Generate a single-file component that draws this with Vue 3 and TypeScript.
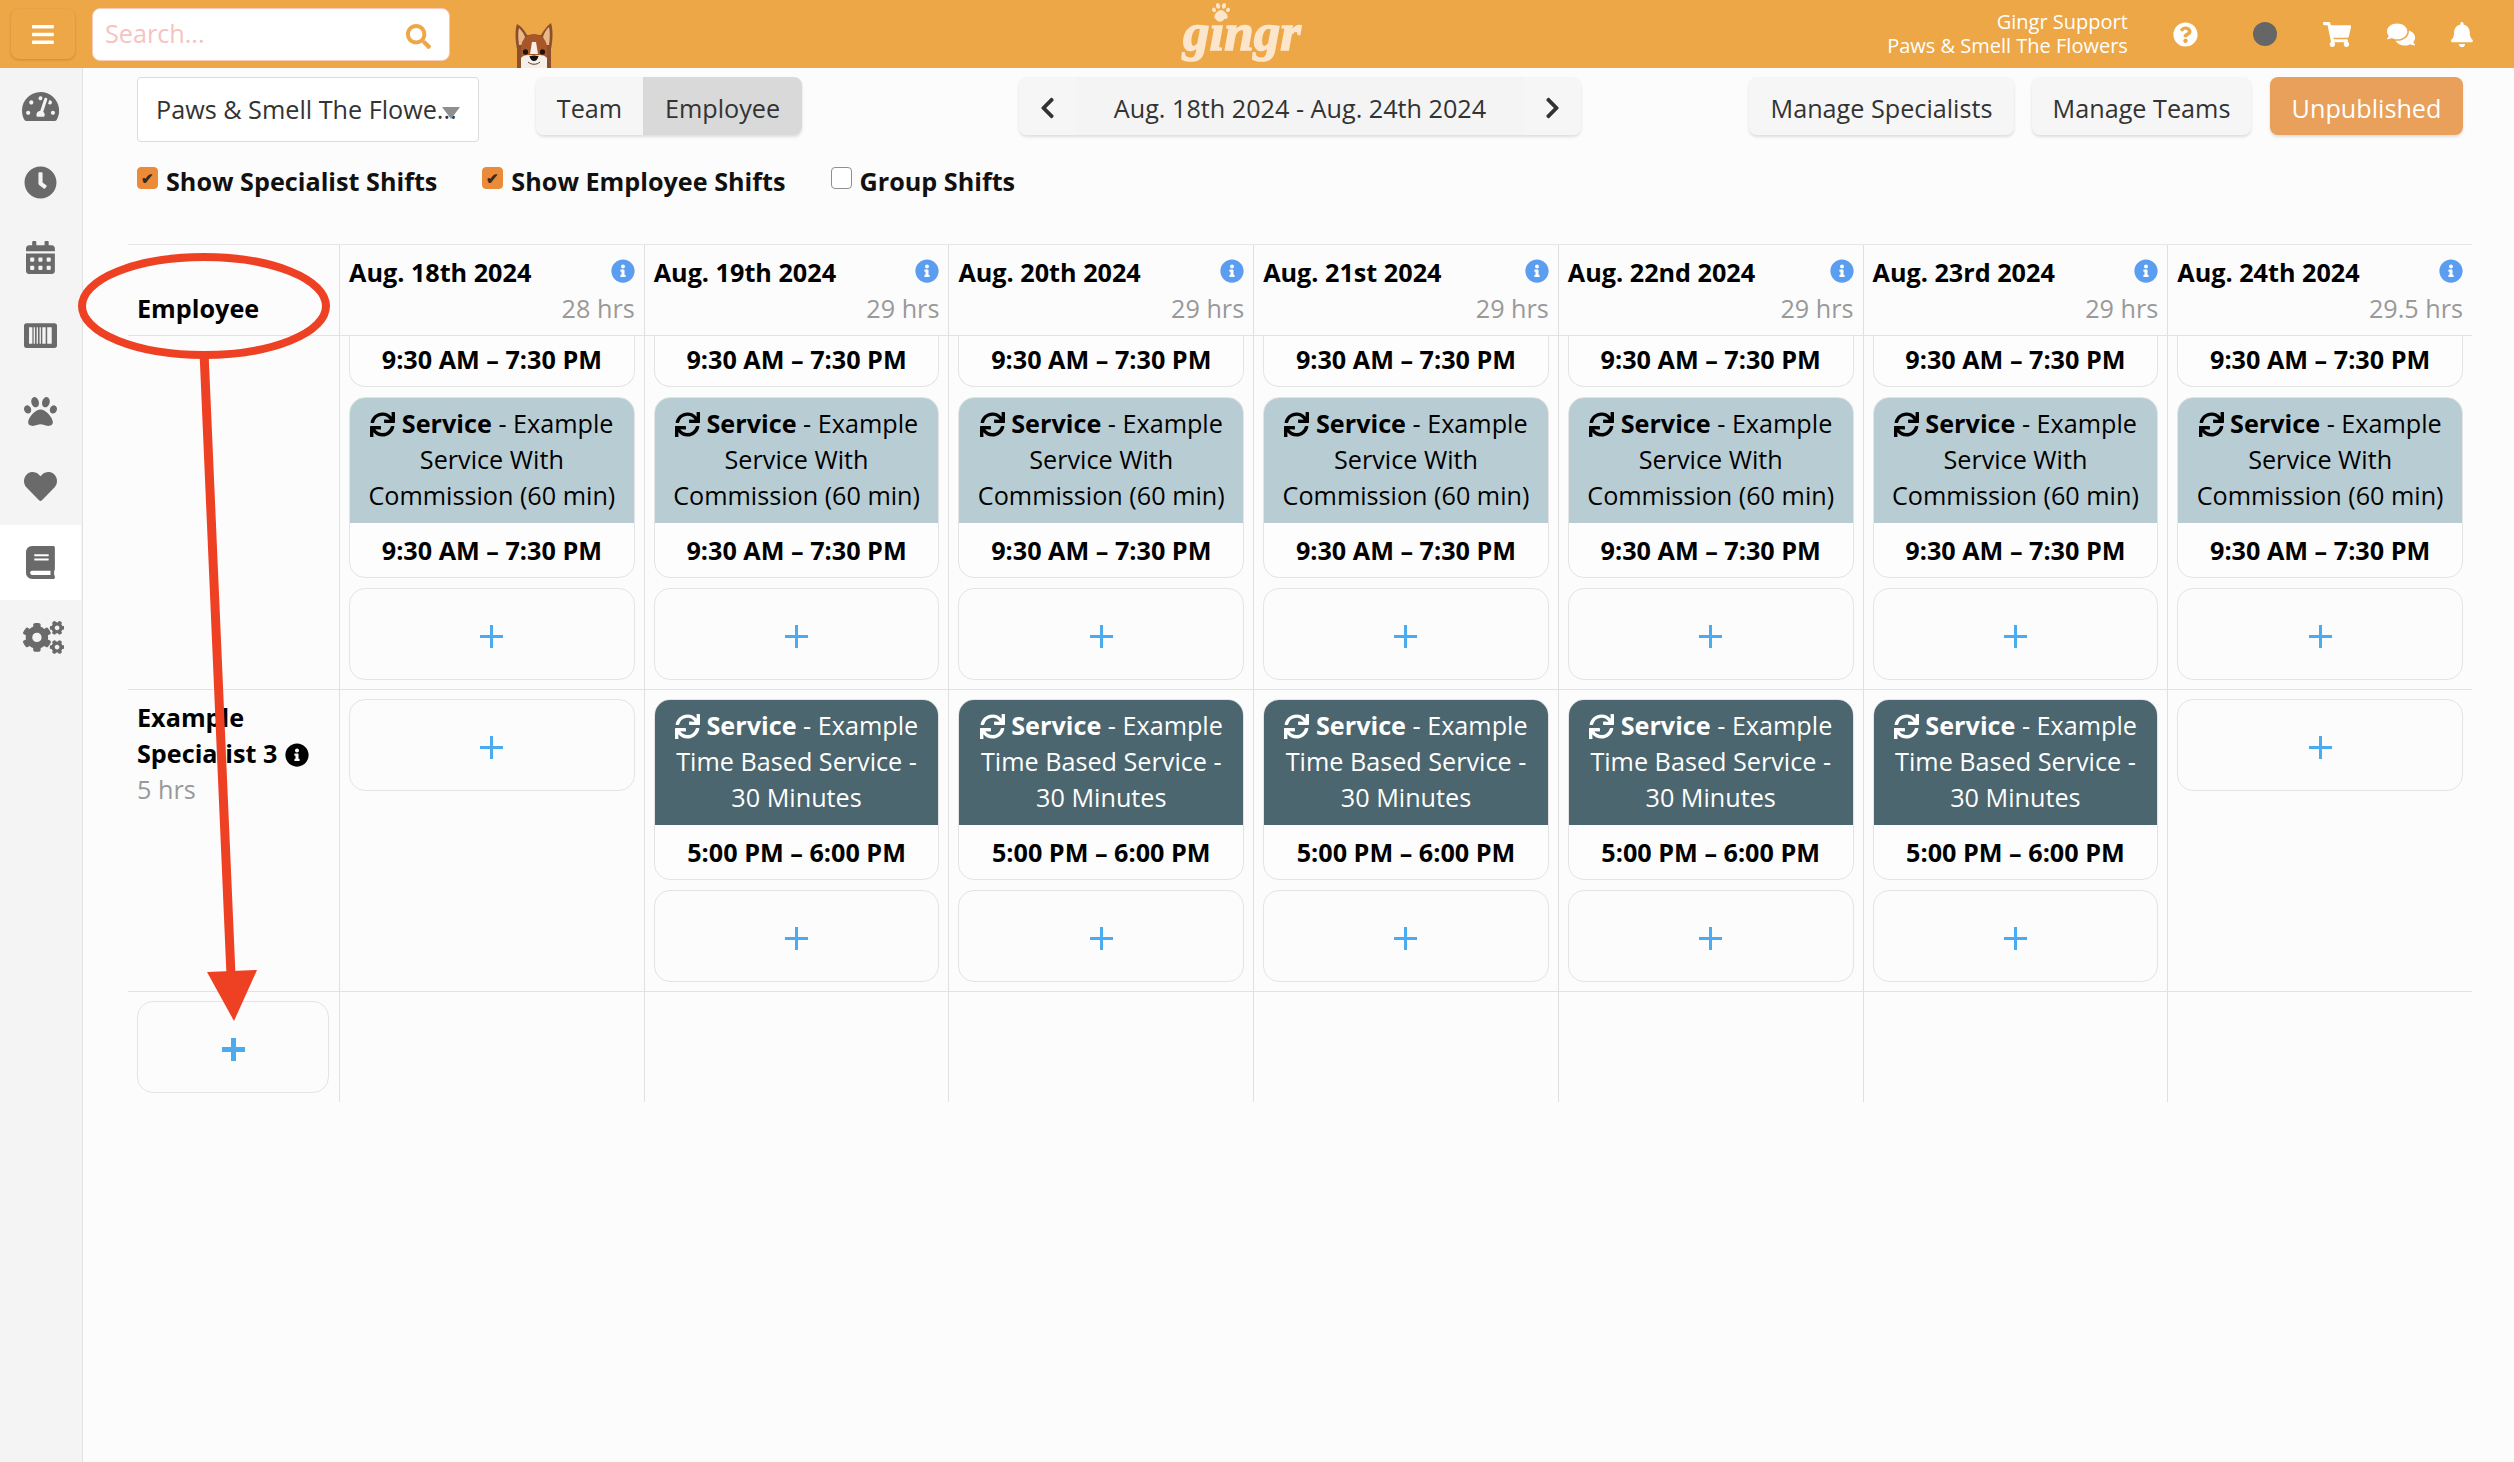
<script setup lang="ts">
  import { h } from 'vue'

  const ICONS: Record<string, [number, string]> = {
    bars: [448, 'M16 132h416c8.837 0 16-7.163 16-16V76c0-8.837-7.163-16-16-16H16C7.163 60 0 67.163 0 76v40c0 8.837 7.163 16 16 16zm0 160h416c8.837 0 16-7.163 16-16v-40c0-8.837-7.163-16-16-16H16c-8.837 0-16 7.163-16 16v40c0 8.837 7.163 16 16 16zm0 160h416c8.837 0 16-7.163 16-16v-40c0-8.837-7.163-16-16-16H16c-8.837 0-16 7.163-16 16v40c0 8.837 7.163 16 16 16z'],
    search: [512, 'M505 442.7L405.3 343c-4.5-4.5-10.6-7-17-7H372c27.6-35.3 44-79.7 44-128C416 93.1 322.9 0 208 0S0 93.1 0 208s93.1 208 208 208c48.3 0 92.7-16.4 128-44v16.3c0 6.4 2.5 12.5 7 17l99.7 99.7c9.4 9.4 24.6 9.4 33.9 0l28.3-28.3c9.4-9.4 9.4-24.6.1-34zM208 336c-70.7 0-128-57.2-128-128 0-70.7 57.2-128 128-128 70.7 0 128 57.2 128 128 0 70.7-57.2 128-128 128z'],
    sync: [512, 'M440.65 12.57l4 82.77A247.16 247.16 0 0 0 255.83 8C134.73 8 33.91 94.92 12.29 209.82A12 12 0 0 0 24.09 224h49.05a12 12 0 0 0 11.67-9.26 175.91 175.91 0 0 1 317-56.94l-101.46-4.86a12 12 0 0 0-12.57 12v47.41a12 12 0 0 0 12 12H500a12 12 0 0 0 12-12V12a12 12 0 0 0-12-12h-47.37a12 12 0 0 0-11.98 12.57zM255.83 432a175.61 175.61 0 0 1-146-77.8l101.8 4.87a12 12 0 0 0 12.57-12v-47.4a12 12 0 0 0-12-12H12a12 12 0 0 0-12 12V500a12 12 0 0 0 12 12h47.35a12 12 0 0 0 12-12.6l-4.15-82.57A247.17 247.17 0 0 0 255.83 504c121.11 0 221.93-86.92 243.55-201.82a12 12 0 0 0-11.8-14.18h-49.05a12 12 0 0 0-11.67 9.26A175.86 175.86 0 0 1 255.83 432z'],
    info: [512, 'M256 8C119.043 8 8 119.083 8 256c0 136.997 111.043 248 248 248s248-111.003 248-248C504 119.083 392.957 8 256 8zm0 110c23.196 0 42 18.804 42 42s-18.804 42-42 42-42-18.804-42-42 18.804-42 42-42zm56 254c0 6.627-5.373 12-12 12h-88c-6.627 0-12-5.373-12-12v-24c0-6.627 5.373-12 12-12h12v-64h-12c-6.627 0-12-5.373-12-12v-24c0-6.627 5.373-12 12-12h64c6.627 0 12 5.373 12 12v100h12c6.627 0 12 5.373 12 12v24z'],
    question: [512, 'M504 256c0 136.997-111.043 248-248 248S8 392.997 8 256C8 119.083 119.043 8 256 8s248 111.083 248 248zM262.655 90c-54.497 0-89.255 22.957-116.549 63.758-3.536 5.286-2.353 12.415 2.715 16.258l34.699 26.31c5.205 3.947 12.621 3.008 16.665-2.122 17.864-22.658 30.113-35.797 57.303-35.797 20.429 0 45.698 13.148 45.698 32.958 0 14.976-12.363 22.667-32.534 33.976C247.128 238.528 216 254.941 216 296v4c0 6.627 5.373 12 12 12h56c6.627 0 12-5.373 12-12v-1.333c0-28.462 83.186-29.647 83.186-106.667 0-58.002-60.165-102-116.531-102zM256 338c-25.365 0-46 20.635-46 46 0 25.364 20.635 46 46 46s46-20.636 46-46c0-25.365-20.635-46-46-46z'],
    cart: [576, 'M528.12 301.319l47.273-208C578.806 78.301 567.391 64 551.99 64H159.208l-9.166-44.81C147.758 8.021 137.93 0 126.529 0H24C10.745 0 0 10.745 0 24v16c0 13.255 10.745 24 24 24h69.883l70.248 343.435C147.325 417.1 136 435.222 136 456c0 30.928 25.072 56 56 56s56-25.072 56-56c0-15.674-6.447-29.835-16.824-40h209.647C430.447 426.165 424 440.326 424 456c0 30.928 25.072 56 56 56s56-25.072 56-56c0-22.172-12.888-41.332-31.579-50.405l5.517-24.276c3.413-15.018-8.002-29.319-23.403-29.319H218.117l-6.545-32h293.145c11.206 0 20.92-7.754 23.403-18.681z'],
    comments: [576, 'M416 192c0-88.4-93.1-160-208-160S0 103.6 0 192c0 34.3 14.1 65.9 38 92-13.4 30.2-35.5 54.2-35.8 54.5-2.2 2.3-2.8 5.7-1.5 8.7S4.8 352 8 352c36.6 0 66.9-12.3 88.7-25 32.2 15.7 70.3 25 111.3 25 114.9 0 208-71.6 208-160zm122 220c23.9-26 38-57.7 38-92 0-66.9-53.5-124.2-129.3-148.1.9 6.6 1.3 13.3 1.3 20.1 0 105.9-107.7 192-240 192-10.8 0-21.3-.8-31.7-1.9C207.8 439.6 281.8 480 368 480c41 0 79.1-9.2 111.3-25 21.8 12.7 52.1 25 88.7 25 3.2 0 6.1-1.9 7.3-4.8 1.3-2.9.7-6.3-1.5-8.7-.3-.3-22.4-24.2-35.8-54.5z'],
    bell: [448, 'M224 512c35.32 0 63.97-28.65 63.97-64H160.03c0 35.35 28.65 64 63.97 64zm215.39-149.71c-19.32-20.76-55.47-51.99-55.47-154.29 0-77.7-54.48-139.9-127.94-155.16V32c0-17.67-14.32-32-31.98-32s-31.98 14.33-31.98 32v20.84C118.56 68.1 64.08 130.3 64.08 208c0 102.3-36.15 133.53-55.47 154.29-6 6.45-8.66 14.16-8.61 21.71.11 16.4 12.98 32 32.1 32h383.8c19.12 0 32-15.6 32.1-32 .05-7.55-2.61-15.27-8.61-21.71z'],
    gauge: [576, 'M288 32C128.94 32 0 160.94 0 320c0 52.8 14.25 102.26 39.06 144.8 5.61 9.62 16.3 15.2 27.44 15.2h443c11.14 0 21.83-5.58 27.44-15.2C561.75 422.26 576 372.8 576 320c0-159.06-128.94-288-288-288zm0 64c14.71 0 26.58 10.13 30.32 23.65-1.11 2.26-2.64 4.23-3.45 6.67l-9.22 27.67c-5.13 3.49-10.97 6.01-17.64 6.01-17.67 0-32-14.33-32-32S270.33 96 288 96zM96 384c-17.67 0-32-14.33-32-32s14.33-32 32-32 32 14.33 32 32-14.33 32-32 32zm48-160c-17.67 0-32-14.33-32-32s14.33-32 32-32 32 14.33 32 32-14.33 32-32 32zm246.77-72.41l-61.33 184C343.13 347.33 352 364.54 352 384c0 11.72-3.38 22.55-8.88 32H232.88c-5.5-9.45-8.88-20.28-8.88-32 0-33.94 26.5-61.43 59.9-63.59l61.34-184.01c4.17-12.56 17.73-19.45 30.36-15.17 12.57 4.19 19.35 17.79 15.17 30.36zm14.66 57.2l15.52-46.55c3.47-1.29 7.13-2.23 11.05-2.23 17.67 0 32 14.33 32 32s-14.33 32-32 32c-11.38-.01-20.89-6.27-26.57-15.22zM480 384c-17.67 0-32-14.33-32-32s14.33-32 32-32 32 14.33 32 32-14.33 32-32 32z'],
    clock: [512, 'M256,8C119,8,8,119,8,256S119,504,256,504,504,393,504,256,393,8,256,8Zm92.49,313h0l-20,25a16,16,0,0,1-22.49,2.5h0l-67-49.72a40,40,0,0,1-15-31.23V112a16,16,0,0,1,16-16h32a16,16,0,0,1,16,16V256l58,42.5A16,16,0,0,1,348.49,321Z'],
    calendar: [448, 'M0 464c0 26.5 21.5 48 48 48h352c26.5 0 48-21.5 48-48V192H0v272zm320-196c0-6.6 5.4-12 12-12h40c6.6 0 12 5.4 12 12v40c0 6.6-5.4 12-12 12h-40c-6.6 0-12-5.4-12-12v-40zm0 128c0-6.6 5.4-12 12-12h40c6.6 0 12 5.4 12 12v40c0 6.6-5.4 12-12 12h-40c-6.6 0-12-5.4-12-12v-40zM192 268c0-6.6 5.4-12 12-12h40c6.6 0 12 5.4 12 12v40c0 6.6-5.4 12-12 12h-40c-6.6 0-12-5.4-12-12v-40zm0 128c0-6.6 5.4-12 12-12h40c6.6 0 12 5.4 12 12v40c0 6.6-5.4 12-12 12h-40c-6.6 0-12-5.4-12-12v-40zM64 268c0-6.6 5.4-12 12-12h40c6.6 0 12 5.4 12 12v40c0 6.6-5.4 12-12 12H76c-6.6 0-12-5.4-12-12v-40zm0 128c0-6.6 5.4-12 12-12h40c6.6 0 12 5.4 12 12v40c0 6.6-5.4 12-12 12H76c-6.6 0-12-5.4-12-12v-40zM400 64h-48V16c0-8.8-7.2-16-16-16h-32c-8.8 0-16 7.2-16 16v48H160V16c0-8.8-7.2-16-16-16h-32c-8.8 0-16 7.2-16 16v48H48C21.5 64 0 85.5 0 112v48h448v-48c0-26.5-21.5-48-48-48z'],
    barcode: [512, 'M36 64h440c20 0 36 16 36 36v312c0 20-16 36-36 36H36c-20 0-36-16-36-36V100c0-20 16-36 36-36zm42 64v256h52V128H78zm72 0v256h20V128h-20zm46 0v256h20V128h-20zm46 0v256h20V128h-20zm42 0v256h52V128h-52zm76 0v256h70V128h-70z'],
    paw: [512, 'M256 224c-79.41 0-192 122.76-192 200.25 0 34.9 26.81 55.75 71.74 55.75 48.84 0 81.09-25.08 120.26-25.08 39.51 0 71.85 25.08 120.26 25.08 44.93 0 71.74-20.85 71.74-55.75C448 346.76 335.41 224 256 224zm-147.28-12.61c-10.4-34.65-42.44-57.09-71.56-50.13-29.12 6.96-44.29 40.69-33.89 75.34 10.4 34.65 42.44 57.09 71.56 50.13 29.12-6.96 44.29-40.69 33.89-75.34zm84.72-20.78c30.94-8.14 46.42-49.94 34.58-93.36s-46.52-72.01-77.46-63.87-46.42 49.94-34.58 93.36c11.84 43.42 46.52 72.02 77.46 63.87zm281.39-29.34c-29.12-6.96-61.15 15.48-71.56 50.13-10.4 34.65 4.77 68.38 33.89 75.34 29.12 6.96 61.15-15.48 71.56-50.13 10.4-34.65-4.77-68.38-33.89-75.34zm-156.27 29.34c30.94 8.14 65.62-20.45 77.46-63.87 11.84-43.42-3.64-85.21-34.58-93.36s-65.62 20.45-77.46 63.87c-11.84 43.42 3.64 85.22 34.58 93.36z'],
    heart: [512, 'M462.3 62.6C407.5 15.9 326 24.3 275.7 76.2L256 96.5l-19.7-20.3C186.1 24.3 104.5 15.9 49.7 62.6c-62.8 53.6-66.1 149.8-9.9 207.9l193.5 199.8c12.5 12.9 32.8 12.9 45.3 0l193.5-199.8c56.3-58.1 53-154.3-9.8-207.9z'],
    book: [448, 'M448 360V24c0-13.3-10.7-24-24-24H96C43 0 0 43 0 96v320c0 53 43 96 96 96h328c13.3 0 24-10.7 24-24v-16c0-7.5-3.5-14.3-8.9-18.7-4.2-15.4-4.2-59.3 0-74.7 5.4-4.3 8.9-11.1 8.9-18.6zM128 134c0-3.3 2.7-6 6-6h212c3.3 0 6 2.7 6 6v20c0 3.3-2.7 6-6 6H134c-3.3 0-6-2.7-6-6v-20zm0 64c0-3.3 2.7-6 6-6h212c3.3 0 6 2.7 6 6v20c0 3.3-2.7 6-6 6H134c-3.3 0-6-2.7-6-6v-20zm253.4 250H96c-17.7 0-32-14.3-32-32 0-17.6 14.4-32 32-32h285.4c-1.9 17.1-1.9 46.9 0 64z'],
    cogs: [640, 'M512.1 191l-8.2 14.3c-3 5.3-9.4 7.5-15.1 5.4-11.8-4.4-22.6-10.7-32.1-18.6-4.6-3.8-5.8-10.5-2.8-15.7l8.2-14.3c-6.9-8-12.3-17.3-15.9-27.4h-16.5c-6 0-11.2-4.3-12.2-10.3-2-12-2.1-24.6 0-37.1 1-6 6.2-10.4 12.2-10.4h16.5c3.6-10.1 9-19.4 15.9-27.4l-8.2-14.3c-3-5.2-1.9-11.9 2.8-15.7 9.5-7.9 20.4-14.2 32.1-18.6 5.7-2.1 12.1.1 15.1 5.4l8.2 14.3c10.5-1.9 21.2-1.9 31.7 0L552 6.3c3-5.3 9.4-7.5 15.1-5.4 11.8 4.4 22.6 10.7 32.1 18.6 4.6 3.8 5.8 10.5 2.8 15.7l-8.2 14.3c6.9 8 12.3 17.3 15.9 27.4h16.5c6 0 11.2 4.3 12.2 10.3 2 12 2.1 24.6 0 37.1-1 6-6.2 10.4-12.2 10.4h-16.5c-3.6 10.1-9 19.4-15.9 27.4l8.2 14.3c3 5.2 1.9 11.9-2.8 15.7-9.5 7.9-20.4 14.2-32.1 18.6-5.7 2.1-12.1-.1-15.1-5.4l-8.2-14.3c-10.4 1.9-21.2 1.9-31.7 0zm-10.5-58.8c38.5 29.6 82.4-14.3 52.8-52.8-38.5-29.7-82.4 14.3-52.8 52.8zM386.3 286.1l33.7 16.8c10.1 5.8 14.5 18.1 10.5 29.1-8.9 24.2-26.4 46.4-42.6 65.8-7.4 8.9-20.2 11.1-30.3 5.3l-29.1-16.8c-16 13.7-34.6 24.6-54.9 31.7v33.6c0 11.6-8.3 21.6-19.7 23.6-24.6 4.2-50.4 4.4-75.9 0-11.5-2-20-11.9-20-23.6V418c-20.3-7.2-38.9-18-54.9-31.7L74 403c-10 5.8-22.9 3.6-30.3-5.3-16.2-19.4-33.3-41.6-42.2-65.7-4-10.9.4-23.2 10.5-29.1l33.3-16.8c-3.9-20.9-3.9-42.4 0-63.4L12 205.8c-10.1-5.8-14.6-18.1-10.5-29 8.9-24.2 26-46.4 42.2-65.8 7.4-8.9 20.2-11.1 30.3-5.3l29.1 16.8c16-13.7 34.6-24.6 54.9-31.7V57.1c0-11.5 8.2-21.5 19.6-23.5 24.6-4.2 50.5-4.4 76-.1 11.5 2 20 11.9 20 23.6v33.6c20.3 7.2 38.9 18 54.9 31.7l29.1-16.8c10-5.8 22.9-3.6 30.3 5.3 16.2 19.4 33.2 41.6 42.1 65.8 4 10.9.1 23.2-10 29.1l-33.7 16.8c3.9 21 3.9 42.5 0 63.5zm-117.6 21.1c59.2-77-28.7-164.9-105.7-105.7-59.2 77 28.7 164.9 105.7 105.7zm243.4 182.7l-8.2 14.3c-3 5.3-9.4 7.5-15.1 5.4-11.8-4.4-22.6-10.7-32.1-18.6-4.6-3.8-5.8-10.5-2.8-15.7l8.2-14.3c-6.9-8-12.3-17.3-15.9-27.4h-16.5c-6 0-11.2-4.3-12.2-10.3-2-12-2.1-24.6 0-37.1 1-6 6.2-10.4 12.2-10.4h16.5c3.6-10.1 9-19.4 15.9-27.4l-8.2-14.3c-3-5.2-1.9-11.9 2.8-15.7 9.5-7.9 20.4-14.2 32.1-18.6 5.7-2.1 12.1.1 15.1 5.4l8.2 14.3c10.5-1.9 21.2-1.9 31.7 0l8.2-14.3c3-5.3 9.4-7.5 15.1-5.4 11.8 4.4 22.6 10.7 32.1 18.6 4.6 3.8 5.8 10.5 2.8 15.7l-8.2 14.3c6.9 8 12.3 17.3 15.9 27.4h16.5c6 0 11.2 4.3 12.2 10.3 2 12 2.1 24.6 0 37.1-1 6-6.2 10.4-12.2 10.4h-16.5c-3.6 10.1-9 19.4-15.9 27.4l8.2 14.3c3 5.2 1.9 11.9-2.8 15.7-9.5 7.9-20.4 14.2-32.1 18.6-5.7 2.1-12.1-.1-15.1-5.4l-8.2-14.3c-10.4 1.9-21.2 1.9-31.7 0zM501.6 431c38.5 29.6 82.4-14.3 52.8-52.8-38.5-29.6-82.4 14.3-52.8 52.8z'],
    left: [320, 'M34.52 239.03L228.87 44.69c9.37-9.37 24.57-9.37 33.94 0l22.67 22.67c9.36 9.36 9.37 24.52.04 33.9L131.49 256l154.02 154.75c9.34 9.38 9.32 24.54-.04 33.9l-22.67 22.67c-9.37 9.37-24.57 9.37-33.94 0L34.52 272.97c-9.37-9.37-9.37-24.57 0-33.94z'],
    right: [320, 'M285.476 272.971L91.132 467.314c-9.373 9.373-24.569 9.373-33.941 0l-22.667-22.667c-9.357-9.357-9.375-24.522-.04-33.901L188.505 256 34.484 101.255c-9.335-9.379-9.317-24.544.04-33.901l22.667-22.667c9.373-9.373 24.569-9.373 33.941 0L285.475 239.03c9.373 9.372 9.373 24.568.001 33.941z'],
  }

  // small inline icon, size comes from font-size
  const Fa = (p: { name: string }) => {
    const icon = ICONS[p.name]
    return h('svg', { viewBox: `0 0 ${icon[0]} 512`, fill: 'currentColor', class: 'fa', 'aria-hidden': 'true' }, [
      h('path', { d: icon[1] }),
    ])
  }

  const navItems = ['gauge', 'clock', 'calendar', 'barcode', 'paw', 'heart', 'book', 'cogs']

  const days = [
    { label: 'Aug. 18th 2024', hrs: '28 hrs', dark: false },
    { label: 'Aug. 19th 2024', hrs: '29 hrs', dark: true },
    { label: 'Aug. 20th 2024', hrs: '29 hrs', dark: true },
    { label: 'Aug. 21st 2024', hrs: '29 hrs', dark: true },
    { label: 'Aug. 22nd 2024', hrs: '29 hrs', dark: true },
    { label: 'Aug. 23rd 2024', hrs: '29 hrs', dark: true },
    { label: 'Aug. 24th 2024', hrs: '29.5 hrs', dark: false },
  ]
</script>

<template>
  <div class="page">
    <header class="topbar">
      <button class="menu-btn"><Fa name="bars" /></button>
      <div class="search">
        <span class="search-text">Search...</span>
        <Fa name="search" class="search-icon" />
      </div>
      <svg class="dog" viewBox="0 0 38 45" aria-hidden="true">
        <path d="M2 26 C0 16 0 6 2 1 C6 3 10 8 12 12 L26 12 C29 7 33 2 36 0 C38 6 38 16 36 26 L36 45 L2 45 Z" fill="#8c4f2c" />
        <path d="M4 22 C3 15 3 9 4 5 C7 8 9 11 10 14 L7 22 Z" fill="#e9b98a" />
        <path d="M34 22 C35 15 35 8 34 4 C31 7 29 10 28 14 L31 22 Z" fill="#e9b98a" />
        <path d="M6 24 C7 15 13 11 19 11 C25 11 31 15 32 24 L32 45 L6 45 Z" fill="#a9552a" />
        <path d="M17 19 L21 19 L23 31 L15 31 Z" fill="#f7efe6" />
        <path d="M6 35 C10 31 15 32 19 33 C23 32 28 31 32 35 L32 45 L6 45 Z" fill="#f5efe8" />
        <ellipse cx="10.5" cy="29" rx="2.6" ry="2.8" fill="#1c1410" />
        <ellipse cx="27.5" cy="29" rx="2.6" ry="2.8" fill="#1c1410" />
        <path d="M14.5 33 L23.5 33 C23 36 21 38 19 38 C17 38 15 36 14.5 33 Z" fill="#15110f" />
        <path d="M13 39 C16 42 22 42 25 39" fill="none" stroke="#5a3a28" stroke-width="1" />
      </svg>
      <div class="logo">
        <Fa name="paw" class="logo-paw" />
        <span class="logo-text">gingr</span>
      </div>
      <div class="account">
        <div>Gingr Support</div>
        <div>Paws &amp; Smell The Flowers</div>
      </div>
      <Fa name="question" class="top-icon i-help" />
      <span class="avatar"></span>
      <Fa name="cart" class="top-icon i-cart" />
      <Fa name="comments" class="top-icon i-chat" />
      <Fa name="bell" class="top-icon i-bell" />
    </header>

    <div class="body">
      <nav class="sidebar">
        <div v-for="item in navItems" :key="item" class="nav-item" :class="[`nav-${item}`, { active: item === 'book' }]">
          <Fa :name="item" />
        </div>
      </nav>

      <main class="content">
        <div class="toolbar">
          <div class="select">
            <span class="select-text">Paws &amp; Smell The Flowe...</span>
            <span class="select-arrow"></span>
          </div>
          <div class="btn-group view-group">
            <button class="btn team">Team</button>
            <button class="btn is-on">Employee</button>
          </div>
          <div class="btn-group date-group">
            <button class="btn arrow"><Fa name="left" /></button>
            <div class="btn date">Aug. 18th 2024 - Aug. 24th 2024</div>
            <button class="btn arrow"><Fa name="right" /></button>
          </div>
          <div class="actions">
            <button class="btn solo spec">Manage Specialists</button>
            <button class="btn solo teams">Manage Teams</button>
            <button class="btn solo publish">Unpublished</button>
          </div>
        </div>

        <div class="filters">
          <label class="check"><span class="box on">✔</span>Show Specialist Shifts</label>
          <label class="check"><span class="box on">✔</span>Show Employee Shifts</label>
          <label class="check"><span class="box"></span>Group Shifts</label>
        </div>

        <div class="grid">
          <div class="cell head first"><strong>Employee</strong></div>
          <div v-for="d in days" :key="d.label" class="cell head">
            <div class="day-line">
              <strong>{{ d.label }}</strong>
              <Fa name="info" class="day-info" />
            </div>
            <div class="hrs">{{ d.hrs }}</div>
          </div>

          <div class="cell first"></div>
          <div v-for="d in days" :key="'r1-' + d.label" class="cell stack row1">
            <div class="card clipped"><div class="time">9:30 AM – 7:30 PM</div></div>
            <div class="card">
              <div class="svc light">
                <Fa name="sync" class="sync" /> <b>Service</b> - Example Service With Commission (60 min)
              </div>
              <div class="time">9:30 AM – 7:30 PM</div>
            </div>
            <div class="add"><span class="plus"></span></div>
          </div>

          <div class="cell first person">
            <strong>Example<br />Specialist 3 <Fa name="info" class="person-info" /></strong>
            <div class="muted">5 hrs</div>
          </div>
          <div v-for="d in days" :key="'r2-' + d.label" class="cell stack">
            <template v-if="d.dark">
              <div class="card">
                <div class="svc dark">
                  <Fa name="sync" class="sync" /> <b>Service</b> - Example Time Based Service - 30 Minutes
                </div>
                <div class="time">5:00 PM – 6:00 PM</div>
              </div>
            </template>
            <div class="add"><span class="plus"></span></div>
          </div>

          <div class="cell stack first last"><div class="add"><span class="plus thick"></span></div></div>
          <div v-for="d in days" :key="'r3-' + d.label" class="cell last"></div>
        </div>
      </main>
    </div>

    <!-- callout drawn on top of the screenshot -->
    <svg class="callout" viewBox="0 0 2514 1462" aria-hidden="true">
      <ellipse cx="204" cy="306" rx="122" ry="49" fill="none" stroke="#ee4023" stroke-width="8" />
      <path d="M204 352 L231 975" fill="none" stroke="#ee4023" stroke-width="9" />
      <path d="M207 972 L257 970 L234 1021 Z" fill="#ee4023" />
    </svg>
  </div>
</template>

<style scoped>
  .page {
    position: relative;
    width: 2514px;
    height: 1462px;
    overflow: hidden;
    background: #fcfcfc;
    color: #333;
    font-family: "Open Sans", "Noto Sans", sans-serif;
    font-size: 25.2px;
    line-height: 36px;
  }

  .fa {
    display: inline-block;
    height: 1em;
    width: auto;
    flex: none;
  }

  button {
    font: inherit;
    border: 0;
    margin: 0;
    color: inherit;
  }

  /* top bar */
  .topbar {
    height: 68px;
    background: #eda746;
    display: flex;
    align-items: center;
    color: #fff;
  }

  .menu-btn {
    width: 64px;
    height: 50px;
    margin-left: 11px;
    border-radius: 8px;
    background: #eda746;
    box-shadow: 0 1px 3px rgba(0, 0, 0, 0.18);
    font-size: 25px;
    color: #fff;
    display: flex;
    align-items: center;
    justify-content: center;
  }

  .search {
    width: 358px;
    height: 53px;
    margin-left: 17px;
    background: #fff;
    border: 1px solid #f6c9b8;
    border-radius: 8px;
    box-sizing: border-box;
    display: flex;
    align-items: center;
    justify-content: space-between;
    padding: 0 18px 2px 12px;
  }

  .search-text {
    color: #f5c3c0;
  }

  .search-icon {
    font-size: 25px;
    color: #eda746;
    margin-top: 6px;
  }

  .dog {
    width: 38px;
    height: 45px;
    margin-left: 65px;
    align-self: flex-end;
  }

  .logo {
    position: relative;
    width: 117px;
    margin-left: 630px;
    height: 68px;
    color: #fbe6cb;
    text-align: center;
  }

  .logo-paw {
    position: absolute;
    left: 29px;
    top: 2px;
    font-size: 18px;
  }

  .logo-text {
    display: block;
    font-family: "Liberation Serif", "DejaVu Serif", serif;
    font-style: italic;
    font-weight: 700;
    font-size: 53px;
    line-height: 52px;
    padding-top: 6px;
    -webkit-text-stroke: 1.5px #fbe6cb;
  }

  .account {
    margin-left: auto;
    text-align: right;
    font-size: 20px;
    line-height: 24px;
  }

  .top-icon {
    font-size: 25px;
  }

  .i-help { margin-left: 45px; }
  .i-cart { margin-left: 46px; }
  .i-chat { margin-left: 36px; }
  .i-bell { margin-left: 36px; margin-right: 41px; }

  .avatar {
    width: 24px;
    height: 24px;
    border-radius: 50%;
    background: #666;
    margin-left: 55px;
  }

  /* sidebar */
  .body {
    display: flex;
    height: 1394px;
  }

  .sidebar {
    width: 82px;
    flex: none;
    box-sizing: content-box;
    background: #f4f4f4;
    border-right: 1px solid #e3e3e3;
    padding-top: 1px;
  }

  .nav-item {
    height: 75.6px;
    display: flex;
    align-items: center;
    justify-content: center;
    color: #6a6a6a;
    font-size: 33px;
    margin-right: 1px;
  }

  .nav-item.active {
    background: #fff;
  }

  .nav-cogs {
    padding-left: 6px;
  }

  .nav-barcode {
    padding-top: 2px;
  }

  /* toolbar */
  .content {
    flex: 1;
    min-width: 0;
    padding: 9px 42px 0 45px;
  }

  .toolbar {
    display: flex;
    align-items: flex-start;
    padding-left: 9px;
    padding-right: 9px;
  }

  .select {
    position: relative;
    width: 342px;
    height: 65px;
    box-sizing: border-box;
    background: #fff;
    border: 1px solid #dcdcdc;
    border-radius: 4px;
    padding: 13px 0 0 18px;
  }

  .select-text {
    display: block;
    white-space: nowrap;
  }

  .select-arrow {
    position: absolute;
    right: 18px;
    top: 29px;
    border-left: 9px solid transparent;
    border-right: 9px solid transparent;
    border-top: 12px solid #8f8f8f;
  }

  .btn-group {
    display: flex;
    height: 58px;
    border-radius: 8px;
    box-shadow: 0 2px 3px rgba(0, 0, 0, 0.12);
    overflow: hidden;
  }

  .view-group {
    margin-left: 57px;
    margin-right: 217px;
  }

  .btn {
    height: 58px;
    background: #f6f6f6;
    padding: 3px 0 0;
    display: flex;
    align-items: center;
    justify-content: center;
    box-sizing: border-box;
    color: #333;
  }

  .btn.team {
    width: 107px;
  }

  .btn.is-on {
    width: 159px;
    background: #d9d9d9;
  }

  .date-group {
    width: 562px;
  }

  .btn.arrow {
    width: 57px;
    flex: none;
    font-size: 24px;
  }

  .btn.date {
    flex: 1;
    background: #f4f4f4;
  }

  .actions {
    margin-left: auto;
    display: flex;
  }

  .btn.solo {
    border-radius: 8px;
    box-shadow: 0 2px 3px rgba(0, 0, 0, 0.12);
  }

  .spec { width: 265px; }
  .teams { width: 219px; margin-left: 18px; }

  .btn.publish {
    width: 193px;
    margin-left: 19px;
    background: #e9a05a;
    color: #fff;
  }

  /* filters */
  .filters {
    display: flex;
    gap: 45px;
    padding-left: 9px;
    margin-top: 22px;
    height: 44px;
    align-items: center;
  }

  .check {
    display: flex;
    align-items: center;
    gap: 8px;
    font-weight: 700;
    color: #111;
    position: relative;
    top: -5px;
  }

  .box {
    width: 21px;
    height: 22px;
    box-sizing: border-box;
    border: 1.5px solid #8f8f8f;
    border-radius: 4px;
    background: #fff;
    margin-top: -6px;
    font-size: 15px;
    line-height: 20px;
    text-align: center;
    color: #3a2a1c;
  }

  .box.on {
    background: #eb8a38;
    border-color: #eb8a38;
  }

  /* schedule grid */
  .grid {
    display: grid;
    grid-template-columns: 211px repeat(7, 1fr);
    margin-top: 36px;
    border-top: 1.5px solid #e6e6e6;
    color: #000;
  }

  .cell {
    min-width: 0;
    border-left: 1px solid #e0e0e0;
    border-bottom: 1.5px solid #e2e2e2;
    padding: 9px 9px 9px 9px;
    box-sizing: border-box;
  }

  .cell.first {
    border-left: 0;
    padding-left: 9px;
    padding-right: 10px;
  }

  .cell.last {
    border-bottom: 0;
    height: 110px;
  }

  .cell.head {
    padding: 9px 9px 9px;
    height: 91px;
  }

  .cell.head.first {
    padding-top: 45px;
  }

  strong,
  b {
    font-weight: 700;
  }

  .day-line {
    display: flex;
    justify-content: space-between;
    align-items: center;
  }

  .day-info {
    font-size: 24px;
    color: #5b9def;
    margin-top: -2px;
  }

  .hrs {
    text-align: right;
    color: #999;
  }

  .stack {
    display: flex;
    flex-direction: column;
    gap: 10px;
  }

  .row1 {
    padding-top: 0;
  }

  .card {
    border: 1.5px solid #e4e4e4;
    border-radius: 16px;
    overflow: hidden;
    background: #fdfdfd;
  }

  .card.clipped {
    border-top: 0;
    border-top-left-radius: 0;
    border-top-right-radius: 0;
    height: 51px;
    box-sizing: border-box;
  }

  .card.clipped .time {
    height: 50px;
    padding-bottom: 4px;
    box-sizing: border-box;
  }

  .svc {
    padding: 7px 4px 10px;
    text-align: center;
  }

  .svc.light {
    background: #b8cdd3;
  }

  .svc.dark {
    background: #4b666e;
    color: #fff;
  }

  .sync {
    font-size: 25px;
    vertical-align: -4px;
  }

  .time {
    height: 54px;
    display: flex;
    align-items: center;
    justify-content: center;
    font-weight: 700;
  }

  .add {
    height: 92px;
    box-sizing: border-box;
    border: 1.5px solid #e4e4e4;
    border-radius: 16px;
    background: #fcfcfc;
    display: flex;
    align-items: center;
    justify-content: center;
    padding-top: 5px;
  }

  .plus {
    position: relative;
    display: block;
    width: 23px;
    height: 23px;
    background:
      linear-gradient(#4aacef, #4aacef) center / 100% 3px no-repeat,
      linear-gradient(#4aacef, #4aacef) center / 3px 100% no-repeat;
  }

  .plus.thick {
    background:
      linear-gradient(#4aacef, #4aacef) center / 100% 5px no-repeat,
      linear-gradient(#4aacef, #4aacef) center / 5px 100% no-repeat;
  }

  .person strong {
    display: block;
  }

  .person-info {
    font-size: 24px;
    vertical-align: -4px;
    margin-left: 1px;
  }

  .muted {
    color: #999;
  }

  .callout {
    position: absolute;
    left: 0;
    top: 0;
    width: 2514px;
    height: 1462px;
    pointer-events: none;
  }
</style>

<style>
  html,
  body {
    margin: 0;
    background: #fcfcfc;
  }
</style>
